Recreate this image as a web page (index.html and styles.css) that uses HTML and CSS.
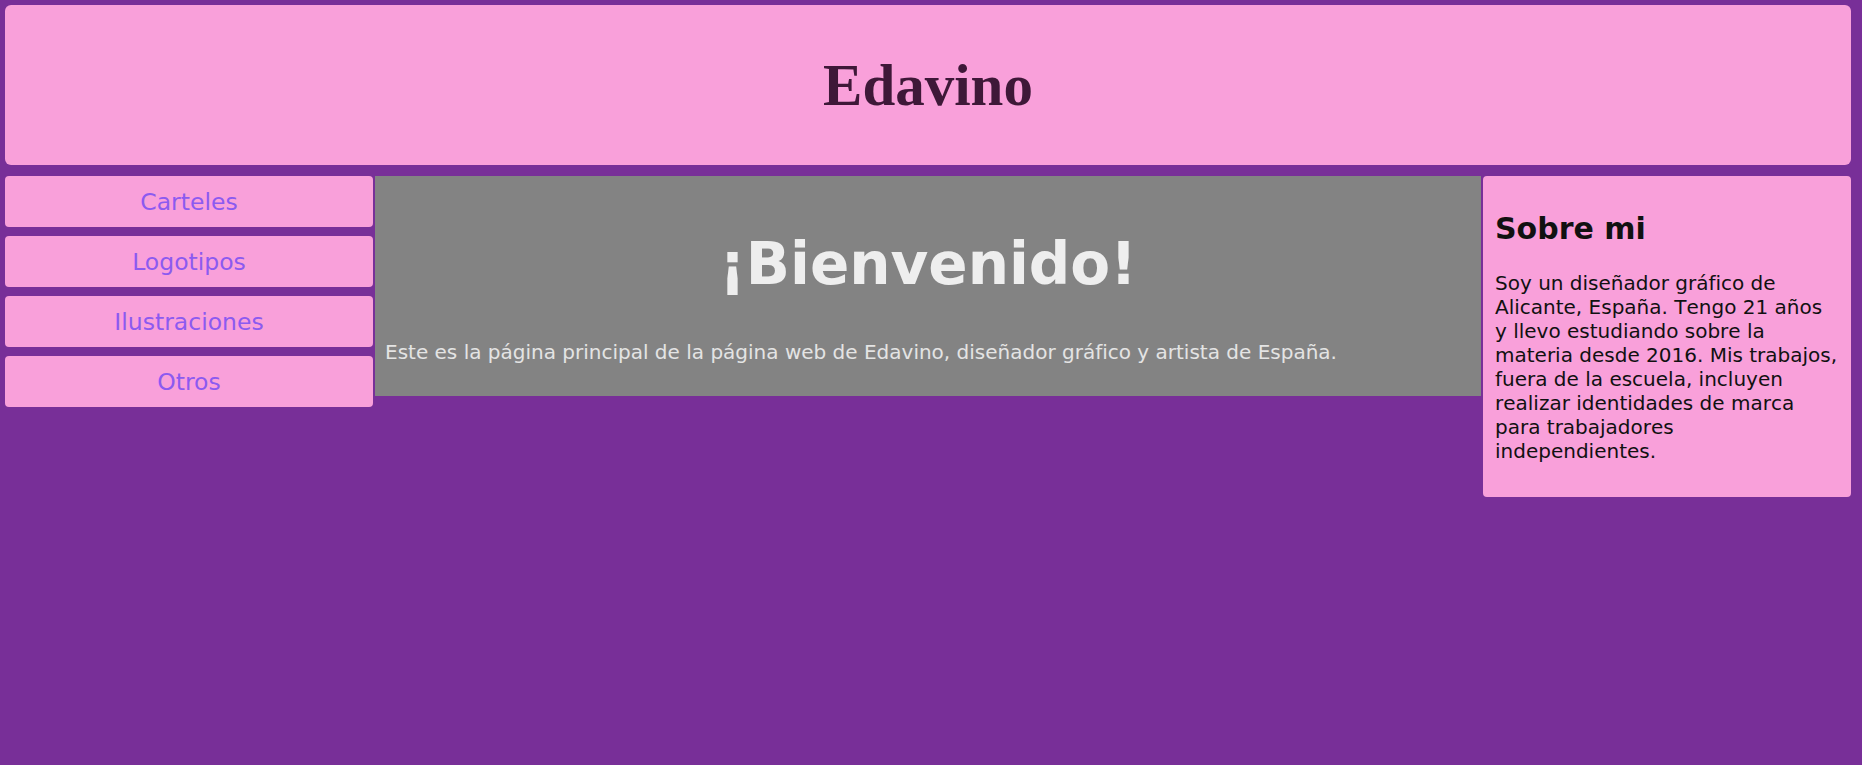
FILE: index.html
```html
<!DOCTYPE html>
<html lang="es">
<head>
<meta charset="utf-8">
<title>Edavino</title>
<link rel="stylesheet" href="styles.css">
</head>
<body>
<div class="page">
  <header class="site-header">
    <h1 class="brand">Edavino</h1>
  </header>
  <div class="layout">
    <nav class="side-nav">
      <a class="nav-item" href="#">Carteles</a>
      <a class="nav-item" href="#">Logotipos</a>
      <a class="nav-item" href="#">Ilustraciones</a>
      <a class="nav-item" href="#">Otros</a>
    </nav>
    <main class="main">
      <h1 class="welcome">¡Bienvenido!</h1>
      <p class="intro">Este es la página principal de la página web de Edavino, diseñador gráfico y artista de España.</p>
    </main>
    <aside class="about">
      <h2 class="about-title">Sobre mi</h2>
      <p class="about-text">Soy un diseñador gráfico de Alicante, España. Tengo 21 años y llevo estudiando sobre la materia desde 2016. Mis trabajos, fuera de la escuela, incluyen realizar identidades de marca para trabajadores independientes.</p>
    </aside>
  </div>
</div>
</body>
</html>
```

FILE: styles.css
```css
html, body {
  margin: 0;
  padding: 0;
}

body {
  background: #782f98;
  font-family: "DejaVu Sans", Verdana, sans-serif;
  font-size: 20px;
  color: #111;
}

.page {
  padding: 5px 11px 5px 5px;
}

.site-header {
  height: 160px;
  background: #f9a0da;
  border-radius: 6px;
  display: flex;
  align-items: center;
  justify-content: center;
}

.brand {
  margin: 0;
  font-family: "Liberation Serif", "Times New Roman", serif;
  font-weight: bold;
  font-size: 59px;
  color: #3e1838;
  line-height: 1;
}

.layout {
  margin-top: 11px;
  display: grid;
  grid-template-columns: 368px 1fr 368px;
  column-gap: 2px;
  align-items: start;
}

.side-nav {
  display: flex;
  flex-direction: column;
  gap: 9px;
}

.nav-item {
  height: 51px;
  background: #f9a0da;
  border-radius: 4px;
  display: flex;
  align-items: center;
  justify-content: center;
  color: #8c5af0;
  text-decoration: none;
  font-size: 23.5px;
}

.main {
  background: #838383;
  padding: 54px 10px 12px;
}

.welcome {
  margin: 0 0 42px;
  text-align: center;
  font-size: 58px;
  font-weight: bold;
  line-height: normal;
  color: #eeeeee;
}

.intro {
  margin: 0 0 20px;
  color: #e4e4e4;
  line-height: normal;
}

.about {
  background: #f9a0da;
  border-radius: 4px;
  padding: 10px 13px 14px 12px;
}

.about-title {
  margin: 25px 0;
  font-size: 30px;
  font-weight: bold;
  line-height: normal;
  color: #111;
}

.about-text {
  margin: 20px 0;
  line-height: 24px;
  color: #111;
  font-kerning: none;
}
```
